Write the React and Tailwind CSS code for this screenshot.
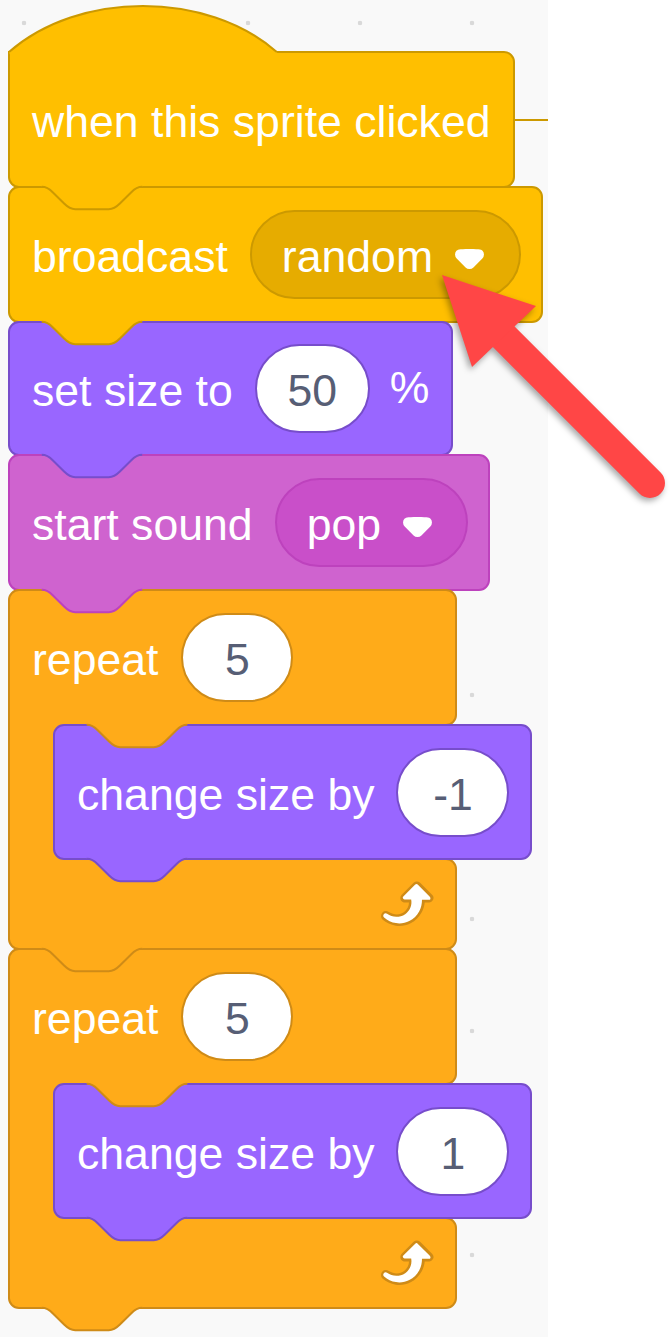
import React from 'react';

const FONT = "font-['Liberation_Sans',Arial,Helvetica,sans-serif]";

// notch tab hanging below a block (scratch units, 1u = 2.79px)
const Tab = ({ fill, stroke, className = '' }) => (
  <svg
    className={`absolute top-full -mt-[1.8px] z-10 ${className}`}
    width="106"
    height="28"
    viewBox="-1 -1 38 10"
    overflow="visible"
  >
    <path d="M0,-1 L0,0 c2,0 3,1 4,2 l4,4 c1,1 2,2 4,2 h12 c2,0 3,-1 4,-2 l4,-4 c1,-1 2,-2 4,-2 L36,-1 Z" fill={fill} />
    <path d="M0,0 c2,0 3,1 4,2 l4,4 c1,1 2,2 4,2 h12 c2,0 3,-1 4,-2 l4,-4 c1,-1 2,-2 4,-2" fill="none" stroke={stroke} strokeWidth="0.72" />
  </svg>
);

const DropArrow = () => (
  <svg width="29" height="20" viewBox="0 0 12.71 8.79" className="translate-y-[4px]">
    <path
      d="M12.71,2.44A2.41,2.41,0,0,1,12,4.16L8.08,8.08a2.45,2.45,0,0,1-3.45,0L0.72,4.16A2.42,2.42,0,0,1,0,2.44,2.48,2.48,0,0,1,.71.71C1,0.47,1.43,0,6.36,0S11.75,0.46,12,.71A2.44,2.44,0,0,1,12.71,2.44Z"
      fill="#fff"
    />
  </svg>
);

const RepeatIcon = () => (
  <svg width="65" height="65" viewBox="0 0 24 24">
    <path
      d="M23.3 11c-.3.6-.9 1-1.5 1h-1.6c-.1 1.3-.5 2.5-1.1 3.6-.9 1.7-2.3 3.2-4.1 4.1-1.7.9-3.6 1.2-5.5.9-1.8-.3-3.5-1.1-4.9-2.3-.7-.7-.7-1.9 0-2.6.6-.6 1.6-.7 2.3-.2H7c.9.6 1.9.9 2.9.9s1.9-.3 2.7-.9c1.1-.8 1.8-2.1 1.8-3.5h-1.5c-.9 0-1.7-.7-1.7-1.7 0-.4.2-.9.5-1.2l4.4-4.4c.7-.6 1.7-.6 2.4 0L23 9.2c.5.5.6 1.2.3 1.8z"
      fill="#CF8B17"
    />
    <path
      d="M21.8 11h-2.6c0 1.5-.3 2.9-1 4.2-.8 1.6-2.1 2.8-3.7 3.6-1.5.8-3.3 1.1-4.9.8-1.6-.2-3.2-1-4.4-2.1-.4-.3-.4-.9-.1-1.2.3-.4.9-.4 1.2-.1 1 .7 2.2 1.1 3.4 1.1s2.3-.3 3.3-1c.9-.6 1.6-1.5 2-2.6.3-.9.4-1.8.2-2.8h-2.4c-.4 0-.7-.3-.7-.7 0-.2.1-.3.2-.4l4.4-4.4c.3-.3.7-.3.9 0L22 9.8c.3.3.4.6.3.9s-.3.3-.5.3z"
      fill="#fff"
    />
  </svg>
);

const Label = ({ children }) => (
  <span className="translate-y-[3px] whitespace-nowrap text-[44.6px] leading-none text-white">{children}</span>
);

const Oval = ({ border, className = '', children }) => (
  <div
    className={`flex h-[89px] shrink-0 items-center justify-center rounded-full border-2 bg-white text-[44.6px] leading-none text-[#575E75] ${border} ${className}`}
  >
    <span className="translate-y-[3px]">{children}</span>
  </div>
);

const Repeat = ({ times, by }) => (
  <div className="-mt-[2px] flex flex-col items-start">
    <div className="relative flex h-[137px] w-[449px] items-center rounded-[11px] rounded-bl-none border-2 border-[#CF8B17] bg-[#FFAB19] pl-[22px]">
      <Label>repeat</Label>
      <Oval border="border-[#CF8B17]" className="ml-[23px] w-[112px]">{times}</Oval>
      <Tab fill="#FFAB19" stroke="#CF8B17" className="left-[73.7px]" />
    </div>
    <div className="-mt-[2px] flex h-[136px]">
      <div className="relative z-[2] w-[57px] border-l-2 border-[#CF8B17] bg-[#FFAB19]" />
      <div className="relative z-[5] -ml-[12px] flex h-[136px] w-[479px] items-center rounded-[11px] border-2 border-[#774DCB] bg-[#9966FF] pl-[22px]">
        <Label>change size by</Label>
        <Oval border="border-[#774DCB]" className="ml-[22px] w-[113px]">{by}</Oval>
        <Tab fill="#9966FF" stroke="#774DCB" className="left-[28.7px]" />
      </div>
    </div>
    <div className="relative -mt-[2px] flex h-[92px] w-[449px] items-start justify-end rounded-[11px] rounded-tl-none border-2 border-[#CF8B17] bg-[#FFAB19] pr-[20px] pt-[10px]">
      <RepeatIcon />
      <Tab fill="#FFAB19" stroke="#CF8B17" className="left-[28.7px]" />
    </div>
  </div>
);

export default function App() {
  return (
    <div className={`relative flex h-[1337px] w-[671px] overflow-hidden bg-white ${FONT}`}>
      <div className="h-[1337px] w-[548px] bg-[#F9F9F9] bg-[radial-gradient(circle,#d9d9d9_2px,transparent_2.6px)] bg-size-[112px_112px] bg-position-[-32px_-33px]">
        <div className="flex flex-col items-start pl-[8px] pt-[5px]">
          {/* hat block */}
          <div className="flex flex-col items-start">
            <svg width="272" height="50" className="relative z-[1]" overflow="visible">
              <path d="M1,47 C70.75,-14.4 199.05,-14.4 268.8,47 L268.8,49.6 L2,49.6 Z" fill="#FFBF00" />
              <path d="M1,47 C70.75,-14.4 199.05,-14.4 268.8,47" fill="none" stroke="#CC9900" strokeWidth="2" />
            </svg>
            <div className="relative -mt-[4px] flex h-[137px] w-[507px] items-center rounded-[11px] rounded-tl-none border-2 border-[#CC9900] bg-[#FFBF00] pl-[22px]">
              <Label>when this sprite clicked</Label>
              <div className="absolute -right-[35px] top-[66px] h-[2px] w-[33px] bg-[#CC9900]" />
              <Tab fill="#FFBF00" stroke="#CC9900" className="left-[28.7px]" />
            </div>
          </div>

          {/* broadcast */}
          <div className="relative -mt-[2px] flex h-[137px] w-[535px] items-center rounded-[11px] border-2 border-[#CC9900] bg-[#FFBF00] pl-[22px]">
            <Label>broadcast</Label>
            <div className="ml-[22px] flex h-[89px] w-[271px] shrink-0 items-center rounded-full border-2 border-[#CC9900] bg-[#E6AC00] pl-[30px]">
              <Label>random</Label>
              <div className="ml-[22px]"><DropArrow /></div>
            </div>
            <Tab fill="#FFBF00" stroke="#CC9900" className="left-[28.7px]" />
          </div>

          {/* set size */}
          <div className="relative -mt-[2px] flex h-[135px] w-[445px] items-center rounded-[11px] border-2 border-[#774DCB] bg-[#9966FF] pl-[22px]">
            <Label>set size to</Label>
            <Oval border="border-[#774DCB]" className="ml-[22px] w-[115px]">50</Oval>
            <span className="ml-[20px]"><Label>%</Label></span>
            <Tab fill="#9966FF" stroke="#774DCB" className="left-[28.7px]" />
          </div>

          {/* start sound */}
          <div className="relative -mt-[2px] flex h-[137px] w-[482px] items-center rounded-[11px] border-2 border-[#BD42BD] bg-[#CF63CF] pl-[22px]">
            <Label>start sound</Label>
            <div className="ml-[22px] flex h-[89px] w-[193px] shrink-0 items-center rounded-full border-2 border-[#BD42BD] bg-[#C94FC9] pl-[30px]">
              <Label>pop</Label>
              <div className="ml-[22px]"><DropArrow /></div>
            </div>
            <Tab fill="#CF63CF" stroke="#BD42BD" className="left-[28.7px]" />
          </div>

          <Repeat times="5" by="-1" />
          <Repeat times="5" by="1" />
        </div>
      </div>

      {/* callout arrow */}
      <svg
        className="absolute left-[420px] top-[255px] z-50 drop-shadow-[-2px_3px_3px_rgba(0,0,0,0.35)]"
        width="260"
        height="260"
        overflow="visible"
      >
        <line x1="70" y1="68" x2="230" y2="228" stroke="#FF4646" strokeWidth="30" strokeLinecap="round" />
        <polygon points="22,20 116,51 52,112" fill="#FF4646" />
      </svg>
    </div>
  );
}
